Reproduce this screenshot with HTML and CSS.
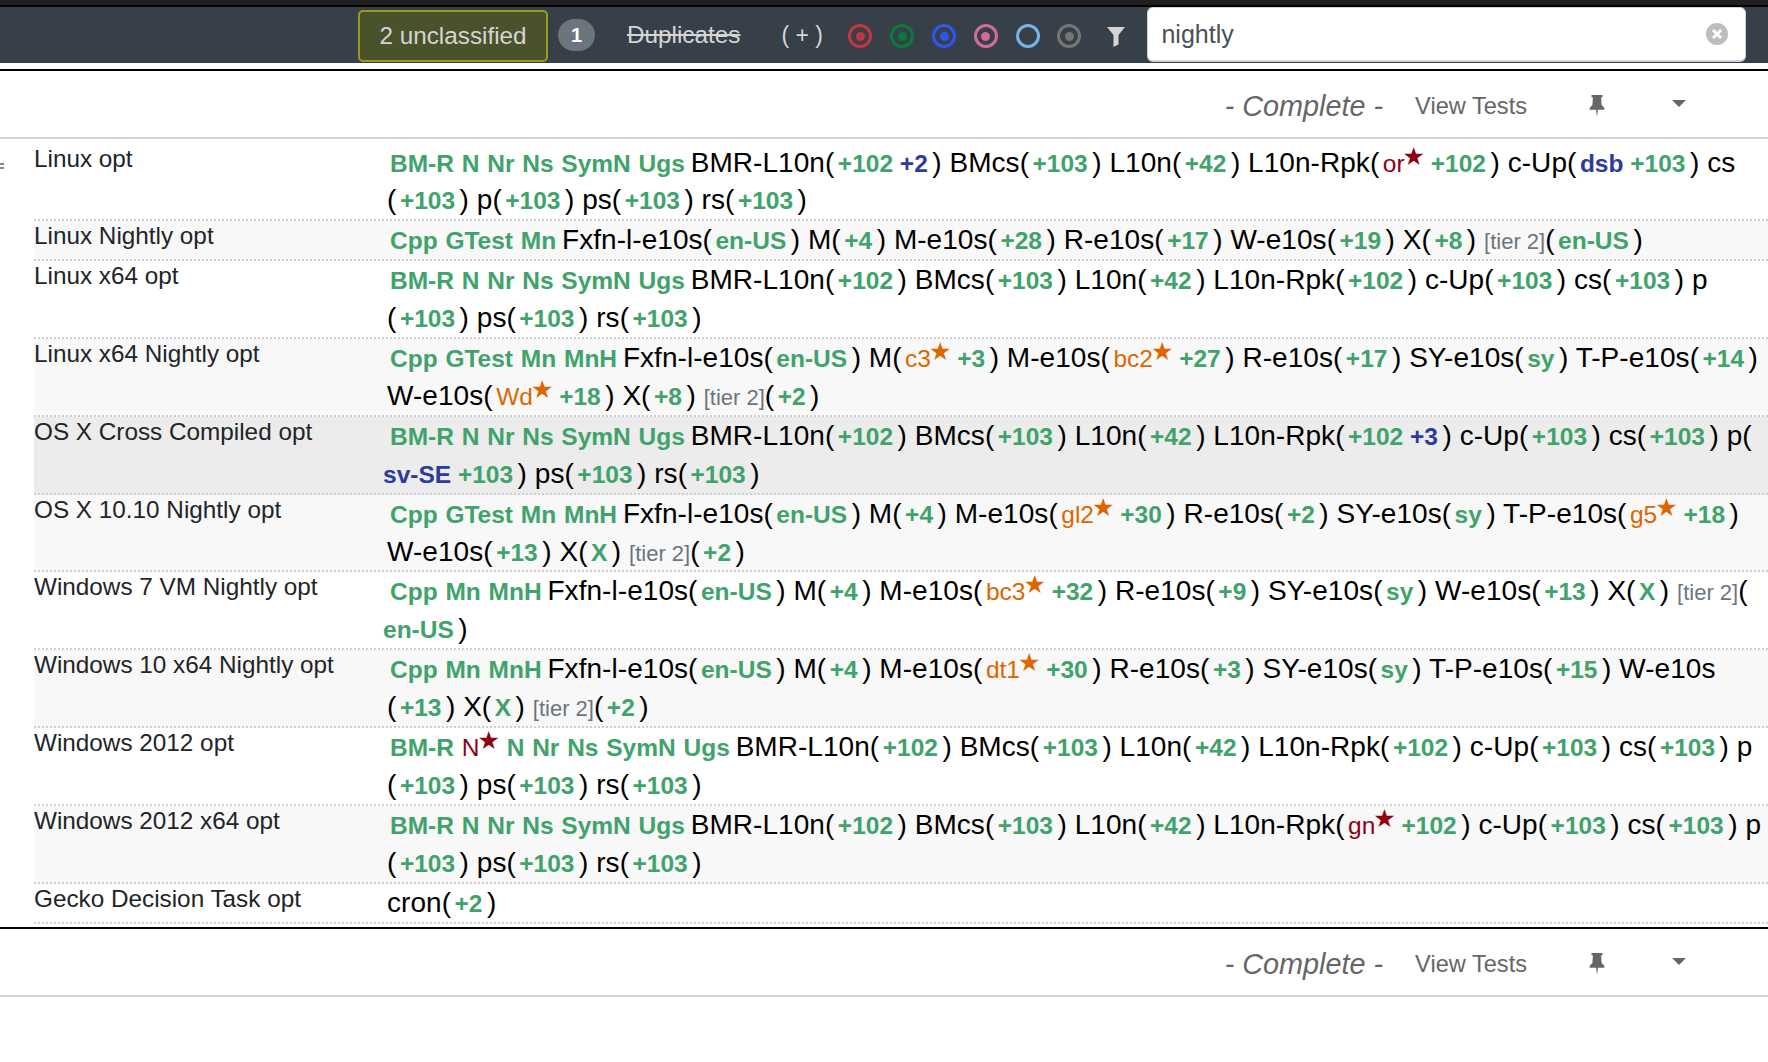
FILE: index.html
```html
<!DOCTYPE html>
<html lang="en">
<head>
<meta charset="utf-8">
<title>Treeherder</title>
<link rel="stylesheet" href="styles.css">
</head>
<body>
<div class="strip"></div>
<nav class="nav">
  <button class="unclassified">2 unclassified</button>
  <span class="badge">1</span>
  <span class="dup">Duplicates</span>
  <span class="plus">( + )</span>
  <div class="dots">
    <span class="dot red"></span>
    <span class="dot green"></span>
    <span class="dot blue"></span>
    <span class="dot pink"></span>
    <span class="dot sky"></span>
    <span class="dot gray"></span>
  </div>
  <svg class="funnel" viewBox="0 0 18 20"><path d="M0 0H18L11.5 8V17.5L6.5 20V8Z"/></svg>
  <div class="search">
    <span class="query">nightly</span>
    <svg class="clear" viewBox="0 0 24 24"><circle cx="12" cy="12" r="11"/><path d="M8 8L16 16M16 8L8 16"/></svg>
  </div>
</nav>

<section class="push">
  <header class="head">
    <em class="state">- Complete -</em>
    <span class="tests">View Tests</span>
    <svg class="pin" viewBox="0 0 16 24"><path d="M2 0H14V2.500H12.500L13 11L16 14V16H9L8 24L7 16H0V14L3 11L3.500 2.500H2Z"/></svg>
    <span class="caret"></span>
  </header>
  <div class="rows">
    <span class="grip"></span>
    <div class="row">
      <div class="label">Linux opt</div>
      <div class="jobs"><span class="lead"><b>BM-R</b> <b>N</b> <b>Nr</b> <b>Ns</b> <b>SymN</b> <b>Ugs</b></span> BMR-L10n(<span class="c"><b>+102</b> <b class="u">+2</b></span>) BMcs(<span class="c"><b>+103</b></span>) L10n(<span class="c"><b>+42</b></span>) L10n-Rpk(<span class="c"><span class="r">or<sup>★</sup></span> <b>+102</b></span>) c-Up(<span class="c"><b class="u">dsb</b> <b>+103</b></span>) cs<br>(<span class="c"><b>+103</b></span>) p(<span class="c"><b>+103</b></span>) ps(<span class="c"><b>+103</b></span>) rs(<span class="c"><b>+103</b></span>)</div>
    </div>
    <div class="row">
      <div class="label">Linux Nightly opt</div>
      <div class="jobs"><span class="lead"><b>Cpp</b> <b>GTest</b> <b>Mn</b></span> Fxfn-l-e10s(<span class="c"><b>en-US</b></span>) M(<span class="c"><b>+4</b></span>) M-e10s(<span class="c"><b>+28</b></span>) R-e10s(<span class="c"><b>+17</b></span>) W-e10s(<span class="c"><b>+19</b></span>) X(<span class="c"><b>+8</b></span>) <span class="tier">[tier 2]</span>(<span class="c"><b>en-US</b></span>)</div>
    </div>
    <div class="row">
      <div class="label">Linux x64 opt</div>
      <div class="jobs"><span class="lead"><b>BM-R</b> <b>N</b> <b>Nr</b> <b>Ns</b> <b>SymN</b> <b>Ugs</b></span> BMR-L10n(<span class="c"><b>+102</b></span>) BMcs(<span class="c"><b>+103</b></span>) L10n(<span class="c"><b>+42</b></span>) L10n-Rpk(<span class="c"><b>+102</b></span>) c-Up(<span class="c"><b>+103</b></span>) cs(<span class="c"><b>+103</b></span>) p<br>(<span class="c"><b>+103</b></span>) ps(<span class="c"><b>+103</b></span>) rs(<span class="c"><b>+103</b></span>)</div>
    </div>
    <div class="row">
      <div class="label">Linux x64 Nightly opt</div>
      <div class="jobs"><span class="lead"><b>Cpp</b> <b>GTest</b> <b>Mn</b> <b>MnH</b></span> Fxfn-l-e10s(<span class="c"><b>en-US</b></span>) M(<span class="c"><span class="o">c3<sup>★</sup></span> <b>+3</b></span>) M-e10s(<span class="c"><span class="o">bc2<sup>★</sup></span> <b>+27</b></span>) R-e10s(<span class="c"><b>+17</b></span>) SY-e10s(<span class="c"><b>sy</b></span>) T-P-e10s(<span class="c"><b>+14</b></span>)<br>W-e10s(<span class="c"><span class="o">Wd<sup>★</sup></span> <b>+18</b></span>) X(<span class="c"><b>+8</b></span>) <span class="tier">[tier 2]</span>(<span class="c"><b>+2</b></span>)</div>
    </div>
    <div class="row selected">
      <div class="label">OS X Cross Compiled opt</div>
      <div class="jobs"><span class="lead"><b>BM-R</b> <b>N</b> <b>Nr</b> <b>Ns</b> <b>SymN</b> <b>Ugs</b></span> BMR-L10n(<span class="c"><b>+102</b></span>) BMcs(<span class="c"><b>+103</b></span>) L10n(<span class="c"><b>+42</b></span>) L10n-Rpk(<span class="c"><b>+102</b> <b class="u">+3</b></span>) c-Up(<span class="c"><b>+103</b></span>) cs(<span class="c"><b>+103</b></span>) p(<br><span class="c outdent"><b class="u">sv-SE</b> <b>+103</b></span>) ps(<span class="c"><b>+103</b></span>) rs(<span class="c"><b>+103</b></span>)</div>
    </div>
    <div class="row">
      <div class="label">OS X 10.10 Nightly opt</div>
      <div class="jobs"><span class="lead"><b>Cpp</b> <b>GTest</b> <b>Mn</b> <b>MnH</b></span> Fxfn-l-e10s(<span class="c"><b>en-US</b></span>) M(<span class="c"><b>+4</b></span>) M-e10s(<span class="c"><span class="o">gl2<sup>★</sup></span> <b>+30</b></span>) R-e10s(<span class="c"><b>+2</b></span>) SY-e10s(<span class="c"><b>sy</b></span>) T-P-e10s(<span class="c"><span class="o">g5<sup>★</sup></span> <b>+18</b></span>)<br>W-e10s(<span class="c"><b>+13</b></span>) X(<span class="c"><b>X</b></span>) <span class="tier">[tier 2]</span>(<span class="c"><b>+2</b></span>)</div>
    </div>
    <div class="row">
      <div class="label">Windows 7 VM Nightly opt</div>
      <div class="jobs"><span class="lead"><b>Cpp</b> <b>Mn</b> <b>MnH</b></span> Fxfn-l-e10s(<span class="c"><b>en-US</b></span>) M(<span class="c"><b>+4</b></span>) M-e10s(<span class="c"><span class="o">bc3<sup>★</sup></span> <b>+32</b></span>) R-e10s(<span class="c"><b>+9</b></span>) SY-e10s(<span class="c"><b>sy</b></span>) W-e10s(<span class="c"><b>+13</b></span>) X(<span class="c"><b>X</b></span>) <span class="tier">[tier 2]</span>(<br><span class="c outdent"><b>en-US</b></span>)</div>
    </div>
    <div class="row">
      <div class="label">Windows 10 x64 Nightly opt</div>
      <div class="jobs"><span class="lead"><b>Cpp</b> <b>Mn</b> <b>MnH</b></span> Fxfn-l-e10s(<span class="c"><b>en-US</b></span>) M(<span class="c"><b>+4</b></span>) M-e10s(<span class="c"><span class="o">dt1<sup>★</sup></span> <b>+30</b></span>) R-e10s(<span class="c"><b>+3</b></span>) SY-e10s(<span class="c"><b>sy</b></span>) T-P-e10s(<span class="c"><b>+15</b></span>) W-e10s<br>(<span class="c"><b>+13</b></span>) X(<span class="c"><b>X</b></span>) <span class="tier">[tier 2]</span>(<span class="c"><b>+2</b></span>)</div>
    </div>
    <div class="row">
      <div class="label">Windows 2012 opt</div>
      <div class="jobs"><span class="lead"><b>BM-R</b> <span class="r big">N<sup>★</sup></span> <b>N</b> <b>Nr</b> <b>Ns</b> <b>SymN</b> <b>Ugs</b></span> BMR-L10n(<span class="c"><b>+102</b></span>) BMcs(<span class="c"><b>+103</b></span>) L10n(<span class="c"><b>+42</b></span>) L10n-Rpk(<span class="c"><b>+102</b></span>) c-Up(<span class="c"><b>+103</b></span>) cs(<span class="c"><b>+103</b></span>) p<br>(<span class="c"><b>+103</b></span>) ps(<span class="c"><b>+103</b></span>) rs(<span class="c"><b>+103</b></span>)</div>
    </div>
    <div class="row">
      <div class="label">Windows 2012 x64 opt</div>
      <div class="jobs"><span class="lead"><b>BM-R</b> <b>N</b> <b>Nr</b> <b>Ns</b> <b>SymN</b> <b>Ugs</b></span> BMR-L10n(<span class="c"><b>+102</b></span>) BMcs(<span class="c"><b>+103</b></span>) L10n(<span class="c"><b>+42</b></span>) L10n-Rpk(<span class="c"><span class="r">gn<sup>★</sup></span> <b>+102</b></span>) c-Up(<span class="c"><b>+103</b></span>) cs(<span class="c"><b>+103</b></span>) p<br>(<span class="c"><b>+103</b></span>) ps(<span class="c"><b>+103</b></span>) rs(<span class="c"><b>+103</b></span>)</div>
    </div>
    <div class="row">
      <div class="label">Gecko Decision Task opt</div>
      <div class="jobs">cron(<span class="c"><b>+2</b></span>)</div>
    </div>
  </div>
</section>

<section class="push last">
  <header class="head">
    <em class="state">- Complete -</em>
    <span class="tests">View Tests</span>
    <svg class="pin" viewBox="0 0 16 24"><path d="M2 0H14V2.500H12.500L13 11L16 14V16H9L8 24L7 16H0V14L3 11L3.500 2.500H2Z"/></svg>
    <span class="caret"></span>
  </header>
</section>
</body>
</html>
```

FILE: styles.css
```css
html, body {
  margin: 0;
  background: #fff;
  overflow: hidden;
  height: 100%;
}
body {
  font-family: "Liberation Sans", Arial, sans-serif;
  color: #212529;
}
.strip {
  height: 5px;
  background: #1f1f1f;
  border-bottom: 2px solid #000;
}
.nav {
  height: 56px;
  background: #373f48;
  display: flex;
  align-items: flex-start;
  color: #d5d5d5;
  font-size: 24.3px;
  padding-left: 358px;
}
.unclassified {
  width: 190px;
  height: 52px;
  margin-top: 3px;
  padding: 0;
  background: #4a522c;
  border: 2px solid #9a9a1e;
  border-radius: 5px;
  color: #d5d5d5;
  font: 24.3px "Liberation Sans", Arial, sans-serif;
}
.badge {
  width: 37px;
  height: 32px;
  margin: 12px 0 0 10px;
  border-radius: 16px;
  background: #6c757d;
  color: #fff;
  font-size: 20px;
  font-weight: bold;
  line-height: 32px;
  text-align: center;
}
.dup {
  margin: 14px 0 0 32px;
  line-height: 28px;
  text-decoration: line-through;
}
.plus {
  margin: 14px 0 0 41px;
  width: 67px;
  font-size: 23px;
  line-height: 28px;
  white-space: pre;
}
.dots {
  display: flex;
  gap: 17.8px;
  margin-top: 17px;
}
.dot {
  width: 24px;
  height: 24px;
  box-sizing: border-box;
  border: 3px solid;
  border-radius: 50%;
  display: flex;
  align-items: center;
  justify-content: center;
}
.dot::after {
  content: "";
  width: 9px;
  height: 9px;
  border-radius: 50%;
  background: currentColor;
}
.red { color: #c2353f; }
.green { color: #0a7a3c; }
.blue { color: #2f56f5; }
.pink { color: #d36a9c; }
.gray { color: #757575; }
.sky { color: #75b4e8; }
.sky::after { display: none; }
.funnel {
  width: 18px;
  height: 20px;
  margin: 20px 0 0 26px;
  fill: #d5d5d5;
}
.search {
  width: 599px;
  height: 55px;
  box-sizing: border-box;
  margin-left: 22px;
  background: #fff;
  border: 1px solid #ced4da;
  border-bottom-width: 2px;
  border-radius: 6px;
  display: flex;
  align-items: center;
  justify-content: space-between;
  padding: 0 16px 0 13px;
}
.query {
  font-size: 25px;
  color: #495057;
}
.clear {
  width: 24px;
  height: 24px;
  fill: #bdbdbd;
}
.clear path {
  stroke: #fff;
  stroke-width: 3;
  fill: none;
}
.push {
  margin-top: 6px;
  border-top: 2px solid #000;
}
.push.last {
  margin-top: 3.5px;
}
.head {
  height: 66px;
  border-bottom: 2px solid #d2d2d2;
  display: flex;
  align-items: flex-start;
  justify-content: flex-end;
  padding-right: 82px;
  color: #666;
}
.state {
  font-size: 28.8px;
  line-height: 34px;
  margin-top: 18px;
}
.tests {
  font-size: 23.6px;
  line-height: 28px;
  margin: 21px 0 0 32px;
}
.pin {
  width: 16px;
  height: 22px;
  margin: 24px 0 0 62px;
  fill: #666;
}
.caret {
  margin: 29px 0 0 67px;
  width: 0;
  height: 0;
  border: 7px solid transparent;
  border-top-color: #666;
  border-bottom: 0;
}
.rows {
  position: relative;
  padding-top: 4.5px;
}
.grip {
  position: absolute;
  left: 0;
  top: 24px;
  width: 4px;
  height: 2px;
  border-top: 2px solid #888;
  border-bottom: 2px solid #888;
}
.row {
  display: flex;
  margin-left: 34px;
  border-bottom: 2px dotted #cfcfcf;
}
.row:nth-child(odd) {
  background: #f8f8f8;
}
.row.selected {
  background: #ececec;
}
.label {
  width: 353px;
  flex: none;
  font-size: 24.3px;
  line-height: 30px;
}
.jobs {
  font-size: 28px;
  line-height: 37.9px;
  letter-spacing: 0.05px;
  white-space: nowrap;
  color: #000;
}
.jobs b {
  font-size: 24.5px;
  color: #40a36b;
}
.jobs b.u {
  color: #2d3a9e;
}
.lead {
  margin: 0 -2px 0 3px;
  letter-spacing: 0;
}
.lead, .c, .tier, .jobs b, .jobs sup {
  line-height: 1;
}
.c {
  font-size: 24.5px;
  letter-spacing: 0;
  margin: 0 4.5px 0 3.5px;
}
.c.outdent {
  margin-left: -4px;
}
.o {
  color: #dd6602;
}
.r {
  color: #8f0010;
}
.big {
  font-size: 24.5px;
}
.jobs sup {
  font-family: "DejaVu Sans", sans-serif;
  font-size: 25px;
  line-height: 0;
  vertical-align: 7px;
  margin: 0 -1px 0 -2px;
}
.tier {
  font-size: 22px;
  letter-spacing: 0;
  color: #6c757d;
}
```
